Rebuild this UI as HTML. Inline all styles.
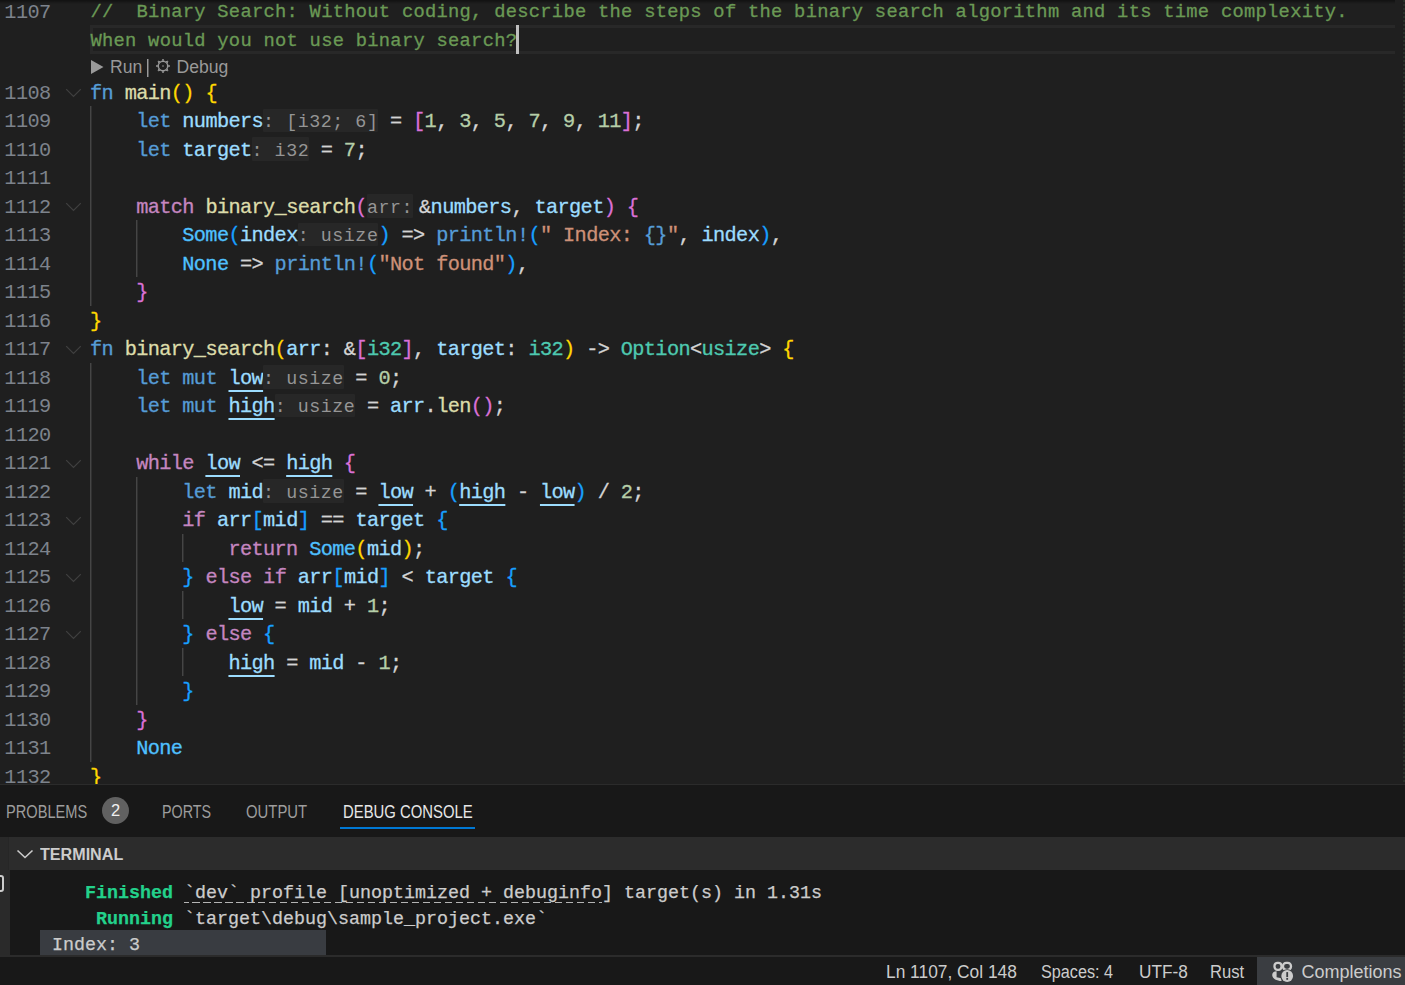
<!DOCTYPE html>
<html><head><meta charset="utf-8"><style>
*{margin:0;padding:0;box-sizing:border-box}
html,body{width:1405px;height:985px;overflow:hidden;background:#181818}
body{position:relative;font-family:"Liberation Sans",sans-serif}
#ed{position:absolute;left:0;top:0;width:1405px;height:784px;background:#1f1f1f;overflow:hidden}
.row{position:absolute;left:90px;height:28.5px;line-height:28.5px;font-family:"Liberation Mono",monospace;font-size:20.3px;letter-spacing:-0.6350px;white-space:pre;color:#d4d4d4;padding-top:2.0px;-webkit-text-stroke:0.3px currentColor}
.ln{position:absolute;left:0;width:50.5px;text-align:right;height:28.5px;line-height:28.5px;font-family:"Liberation Mono",monospace;font-size:20.3px;letter-spacing:-0.6350px;color:#7d838c;padding-top:2.0px}
.h{-webkit-text-stroke:0;color:#959595;background:#272727;display:inline-block;font-size:18.3px;letter-spacing:0.5650px;line-height:17.93px;padding-top:5.37px;border-radius:1px}
.hp{margin-right:6px}
.cm{margin-left:0.45px;padding-top:1.5px;font-size:18.8px;letter-spacing:0.2650px;-webkit-text-stroke:0.3px currentColor}
.u{color:#9cdcfe;text-decoration:underline;text-decoration-thickness:2px;text-underline-offset:6px}
.hl{position:absolute;left:90px;width:1305px;height:29px;border:3px solid #282828;border-right:none}
.cursor{position:absolute;width:3px;height:29px;background:#c0c0c0}
.lens{position:absolute;height:24px;line-height:24px;font-size:17.6px;color:#999999;white-space:pre;transform-origin:0 0}
.tri{display:inline-block;width:0;height:0;border-left:13px solid #999;border-top:7px solid transparent;border-bottom:7px solid transparent;margin-right:6px;vertical-align:-1px}
.g{position:absolute;width:1px;background:#454545;box-shadow:1px 0 0 #303030}
.fold{position:absolute;left:65px}
#panel{position:absolute;left:0;top:784px;width:1405px;height:171px;background:#181818;border-top:1px solid #2b2b2b}
.tab{position:absolute;top:16.5px;font-size:17.9px;color:#9d9d9d;white-space:pre;transform:scaleX(0.831);transform-origin:0 0}
.badge{position:absolute;left:102px;top:12px;width:27px;height:27px;border-radius:14px;background:#616161;color:#f0f0f0;font-size:16.5px;text-align:center;line-height:27px}
.th{position:absolute;left:0;top:52px;width:1405px;height:33px;background:#2c2c2c}
.term{position:absolute;left:10px;top:85px;width:1395px;height:86px;background:#181818}
.tl{position:absolute;left:31px;height:26px;line-height:26px;padding-top:1.5px;font-family:"Liberation Mono",monospace;font-size:18.33px;color:#cccccc;white-space:pre;-webkit-text-stroke:0.25px currentColor}
.dl{background:repeating-linear-gradient(90deg,#b4b4b4 0 4.5px,transparent 4.5px 8px,#b4b4b4 8px 11px) 0 calc(100% - 1px)/100% 1px no-repeat;}
#sb{position:absolute;left:0;top:955px;width:1405px;height:30px;background:#181818;border-top:2px solid #2b2b2b}
.si{position:absolute;top:4.5px;font-size:18px;color:#cccccc;white-space:pre;transform-origin:0 0}
</style></head>
<body>
<div id="ed">
<div class="ln" style="top:-3.50px">1107</div>
<div class="hl" style="top:25.00px"></div>
<div class="row cm" style="top:-3.50px;color:#6a9955">//  Binary Search: Without coding, describe the steps of the binary search algorithm and its time complexity.</div>
<div class="row cm" style="top:25.00px;color:#6a9955">When would you not use binary search?</div>
<div class="cursor" style="left:516px;top:25px"></div>
<svg style="position:absolute;left:91px;top:59.70px" width="13" height="14" viewBox="0 0 13 14"><path d="M0 0 L12.5 7 L0 14 Z" fill="#9a9a9a"/></svg>
<div class="lens" style="left:110px;top:54.50px">Run</div>
<div style="position:absolute;left:147px;top:58.50px;width:1px;height:18px;background:#9a9a9a;box-shadow:1px 0 0 #5a5a5a"></div>
<svg style="position:absolute;left:156px;top:59.10px" width="14" height="14" viewBox="0 0 14 14"><circle cx="7" cy="7" r="4.6" fill="none" stroke="#999" stroke-width="1.2"/><path d="M11.42 5.73 L13.90 7.00 L11.42 8.27" fill="none" stroke="#999" stroke-width="1"/><path d="M11.02 9.23 L11.88 11.88 L9.23 11.02" fill="none" stroke="#999" stroke-width="1"/><path d="M8.27 11.42 L7.00 13.90 L5.73 11.42" fill="none" stroke="#999" stroke-width="1"/><path d="M4.77 11.02 L2.12 11.88 L2.98 9.23" fill="none" stroke="#999" stroke-width="1"/><path d="M2.58 8.27 L0.10 7.00 L2.58 5.73" fill="none" stroke="#999" stroke-width="1"/><path d="M2.98 4.77 L2.12 2.12 L4.77 2.98" fill="none" stroke="#999" stroke-width="1"/><path d="M5.73 2.58 L7.00 0.10 L8.27 2.58" fill="none" stroke="#999" stroke-width="1"/><path d="M9.23 2.98 L11.88 2.12 L11.02 4.77" fill="none" stroke="#999" stroke-width="1"/><circle cx="7" cy="7" r="0.8" fill="#999"/></svg>
<div class="lens" style="left:176.5px;top:54.50px">Debug</div>
<div class="g" style="left:90.00px;top:106.20px;height:199.50px"></div>
<div class="g" style="left:136.18px;top:220.20px;height:57.00px"></div>
<div class="g" style="left:90.00px;top:362.70px;height:399.00px"></div>
<div class="g" style="left:136.18px;top:476.70px;height:228.00px"></div>
<div class="g" style="left:182.36px;top:533.70px;height:28.50px"></div>
<div class="g" style="left:182.36px;top:590.70px;height:28.50px"></div>
<div class="g" style="left:182.36px;top:647.70px;height:28.50px"></div>
<div class="ln" style="top:77.70px">1108</div>
<svg class="fold" style="top:88.20px" width="17" height="10" viewBox="0 0 17 10"><path d="M1.2 1.2 L8.5 8.5 L15.8 1.2" fill="none" stroke="#404040" stroke-width="1.2"/></svg>
<div class="row" style="top:77.70px"><span style="color:#569cd6">fn</span><span style="color:#d4d4d4"> </span><span style="color:#dcdcaa">main</span><span style="color:#ffd700">()</span><span style="color:#d4d4d4"> </span><span style="color:#ffd700">{</span></div>
<div class="ln" style="top:106.20px">1109</div>
<div class="row" style="top:106.20px"><span style="color:#d4d4d4">    </span><span style="color:#569cd6">let</span><span style="color:#d4d4d4"> </span><span style="color:#9cdcfe">numbers</span><span class="h">: [i32; 6]</span><span style="color:#d4d4d4"> = </span><span style="color:#da70d6">[</span><span style="color:#b5cea8">1</span><span style="color:#d4d4d4">, </span><span style="color:#b5cea8">3</span><span style="color:#d4d4d4">, </span><span style="color:#b5cea8">5</span><span style="color:#d4d4d4">, </span><span style="color:#b5cea8">7</span><span style="color:#d4d4d4">, </span><span style="color:#b5cea8">9</span><span style="color:#d4d4d4">, </span><span style="color:#b5cea8">11</span><span style="color:#da70d6">]</span><span style="color:#d4d4d4">;</span></div>
<div class="ln" style="top:134.70px">1110</div>
<div class="row" style="top:134.70px"><span style="color:#d4d4d4">    </span><span style="color:#569cd6">let</span><span style="color:#d4d4d4"> </span><span style="color:#9cdcfe">target</span><span class="h">: i32</span><span style="color:#d4d4d4"> = </span><span style="color:#b5cea8">7</span><span style="color:#d4d4d4">;</span></div>
<div class="ln" style="top:163.20px">1111</div>
<div class="row" style="top:163.20px"></div>
<div class="ln" style="top:191.70px">1112</div>
<svg class="fold" style="top:202.20px" width="17" height="10" viewBox="0 0 17 10"><path d="M1.2 1.2 L8.5 8.5 L15.8 1.2" fill="none" stroke="#404040" stroke-width="1.2"/></svg>
<div class="row" style="top:191.70px"><span style="color:#d4d4d4">    </span><span style="color:#c586c0">match</span><span style="color:#d4d4d4"> </span><span style="color:#dcdcaa">binary_search</span><span style="color:#da70d6">(</span><span class="h hp">arr:</span><span style="color:#d4d4d4">&amp;</span><span style="color:#9cdcfe">numbers</span><span style="color:#d4d4d4">, </span><span style="color:#9cdcfe">target</span><span style="color:#da70d6">)</span><span style="color:#d4d4d4"> </span><span style="color:#da70d6">{</span></div>
<div class="ln" style="top:220.20px">1113</div>
<div class="row" style="top:220.20px"><span style="color:#d4d4d4">        </span><span style="color:#4fc1ff">Some</span><span style="color:#179fff">(</span><span style="color:#9cdcfe">index</span><span class="h">: usize</span><span style="color:#179fff">)</span><span style="color:#d4d4d4"> =&gt; </span><span style="color:#569cd6">println!</span><span style="color:#179fff">(</span><span style="color:#ce9178">&quot; Index: </span><span style="color:#569cd6">{}</span><span style="color:#ce9178">&quot;</span><span style="color:#d4d4d4">, </span><span style="color:#9cdcfe">index</span><span style="color:#179fff">)</span><span style="color:#d4d4d4">,</span></div>
<div class="ln" style="top:248.70px">1114</div>
<div class="row" style="top:248.70px"><span style="color:#d4d4d4">        </span><span style="color:#4fc1ff">None</span><span style="color:#d4d4d4"> =&gt; </span><span style="color:#569cd6">println!</span><span style="color:#179fff">(</span><span style="color:#ce9178">&quot;Not found&quot;</span><span style="color:#179fff">)</span><span style="color:#d4d4d4">,</span></div>
<div class="ln" style="top:277.20px">1115</div>
<div class="row" style="top:277.20px"><span style="color:#d4d4d4">    </span><span style="color:#da70d6">}</span></div>
<div class="ln" style="top:305.70px">1116</div>
<div class="row" style="top:305.70px"><span style="color:#ffd700">}</span></div>
<div class="ln" style="top:334.20px">1117</div>
<svg class="fold" style="top:344.70px" width="17" height="10" viewBox="0 0 17 10"><path d="M1.2 1.2 L8.5 8.5 L15.8 1.2" fill="none" stroke="#404040" stroke-width="1.2"/></svg>
<div class="row" style="top:334.20px"><span style="color:#569cd6">fn</span><span style="color:#d4d4d4"> </span><span style="color:#dcdcaa">binary_search</span><span style="color:#ffd700">(</span><span style="color:#9cdcfe">arr</span><span style="color:#d4d4d4">: &amp;</span><span style="color:#da70d6">[</span><span style="color:#4ec9b0">i32</span><span style="color:#da70d6">]</span><span style="color:#d4d4d4">, </span><span style="color:#9cdcfe">target</span><span style="color:#d4d4d4">: </span><span style="color:#4ec9b0">i32</span><span style="color:#ffd700">)</span><span style="color:#d4d4d4"> -&gt; </span><span style="color:#4ec9b0">Option</span><span style="color:#d4d4d4">&lt;</span><span style="color:#4ec9b0">usize</span><span style="color:#d4d4d4">&gt;</span><span style="color:#d4d4d4"> </span><span style="color:#ffd700">{</span></div>
<div class="ln" style="top:362.70px">1118</div>
<div class="row" style="top:362.70px"><span style="color:#d4d4d4">    </span><span style="color:#569cd6">let</span><span style="color:#d4d4d4"> </span><span style="color:#569cd6">mut</span><span style="color:#d4d4d4"> </span><span class="u">low</span><span class="h">: usize</span><span style="color:#d4d4d4"> = </span><span style="color:#b5cea8">0</span><span style="color:#d4d4d4">;</span></div>
<div class="ln" style="top:391.20px">1119</div>
<div class="row" style="top:391.20px"><span style="color:#d4d4d4">    </span><span style="color:#569cd6">let</span><span style="color:#d4d4d4"> </span><span style="color:#569cd6">mut</span><span style="color:#d4d4d4"> </span><span class="u">high</span><span class="h">: usize</span><span style="color:#d4d4d4"> = </span><span style="color:#9cdcfe">arr</span><span style="color:#d4d4d4">.</span><span style="color:#dcdcaa">len</span><span style="color:#da70d6">()</span><span style="color:#d4d4d4">;</span></div>
<div class="ln" style="top:419.70px">1120</div>
<div class="row" style="top:419.70px"></div>
<div class="ln" style="top:448.20px">1121</div>
<svg class="fold" style="top:458.70px" width="17" height="10" viewBox="0 0 17 10"><path d="M1.2 1.2 L8.5 8.5 L15.8 1.2" fill="none" stroke="#404040" stroke-width="1.2"/></svg>
<div class="row" style="top:448.20px"><span style="color:#d4d4d4">    </span><span style="color:#c586c0">while</span><span style="color:#d4d4d4"> </span><span class="u">low</span><span style="color:#d4d4d4"> &lt;= </span><span class="u">high</span><span style="color:#d4d4d4"> </span><span style="color:#da70d6">{</span></div>
<div class="ln" style="top:476.70px">1122</div>
<div class="row" style="top:476.70px"><span style="color:#d4d4d4">        </span><span style="color:#569cd6">let</span><span style="color:#d4d4d4"> </span><span style="color:#9cdcfe">mid</span><span class="h">: usize</span><span style="color:#d4d4d4"> = </span><span class="u">low</span><span style="color:#d4d4d4"> + </span><span style="color:#179fff">(</span><span class="u">high</span><span style="color:#d4d4d4"> - </span><span class="u">low</span><span style="color:#179fff">)</span><span style="color:#d4d4d4"> / </span><span style="color:#b5cea8">2</span><span style="color:#d4d4d4">;</span></div>
<div class="ln" style="top:505.20px">1123</div>
<svg class="fold" style="top:515.70px" width="17" height="10" viewBox="0 0 17 10"><path d="M1.2 1.2 L8.5 8.5 L15.8 1.2" fill="none" stroke="#404040" stroke-width="1.2"/></svg>
<div class="row" style="top:505.20px"><span style="color:#d4d4d4">        </span><span style="color:#c586c0">if</span><span style="color:#d4d4d4"> </span><span style="color:#9cdcfe">arr</span><span style="color:#179fff">[</span><span style="color:#9cdcfe">mid</span><span style="color:#179fff">]</span><span style="color:#d4d4d4"> == </span><span style="color:#9cdcfe">target</span><span style="color:#d4d4d4"> </span><span style="color:#179fff">{</span></div>
<div class="ln" style="top:533.70px">1124</div>
<div class="row" style="top:533.70px"><span style="color:#d4d4d4">            </span><span style="color:#c586c0">return</span><span style="color:#d4d4d4"> </span><span style="color:#4fc1ff">Some</span><span style="color:#ffd700">(</span><span style="color:#9cdcfe">mid</span><span style="color:#ffd700">)</span><span style="color:#d4d4d4">;</span></div>
<div class="ln" style="top:562.20px">1125</div>
<svg class="fold" style="top:572.70px" width="17" height="10" viewBox="0 0 17 10"><path d="M1.2 1.2 L8.5 8.5 L15.8 1.2" fill="none" stroke="#404040" stroke-width="1.2"/></svg>
<div class="row" style="top:562.20px"><span style="color:#d4d4d4">        </span><span style="color:#179fff">}</span><span style="color:#d4d4d4"> </span><span style="color:#c586c0">else</span><span style="color:#d4d4d4"> </span><span style="color:#c586c0">if</span><span style="color:#d4d4d4"> </span><span style="color:#9cdcfe">arr</span><span style="color:#179fff">[</span><span style="color:#9cdcfe">mid</span><span style="color:#179fff">]</span><span style="color:#d4d4d4"> &lt; </span><span style="color:#9cdcfe">target</span><span style="color:#d4d4d4"> </span><span style="color:#179fff">{</span></div>
<div class="ln" style="top:590.70px">1126</div>
<div class="row" style="top:590.70px"><span style="color:#d4d4d4">            </span><span class="u">low</span><span style="color:#d4d4d4"> = </span><span style="color:#9cdcfe">mid</span><span style="color:#d4d4d4"> + </span><span style="color:#b5cea8">1</span><span style="color:#d4d4d4">;</span></div>
<div class="ln" style="top:619.20px">1127</div>
<svg class="fold" style="top:629.70px" width="17" height="10" viewBox="0 0 17 10"><path d="M1.2 1.2 L8.5 8.5 L15.8 1.2" fill="none" stroke="#404040" stroke-width="1.2"/></svg>
<div class="row" style="top:619.20px"><span style="color:#d4d4d4">        </span><span style="color:#179fff">}</span><span style="color:#d4d4d4"> </span><span style="color:#c586c0">else</span><span style="color:#d4d4d4"> </span><span style="color:#179fff">{</span></div>
<div class="ln" style="top:647.70px">1128</div>
<div class="row" style="top:647.70px"><span style="color:#d4d4d4">            </span><span class="u">high</span><span style="color:#d4d4d4"> = </span><span style="color:#9cdcfe">mid</span><span style="color:#d4d4d4"> - </span><span style="color:#b5cea8">1</span><span style="color:#d4d4d4">;</span></div>
<div class="ln" style="top:676.20px">1129</div>
<div class="row" style="top:676.20px"><span style="color:#d4d4d4">        </span><span style="color:#179fff">}</span></div>
<div class="ln" style="top:704.70px">1130</div>
<div class="row" style="top:704.70px"><span style="color:#d4d4d4">    </span><span style="color:#da70d6">}</span></div>
<div class="ln" style="top:733.20px">1131</div>
<div class="row" style="top:733.20px"><span style="color:#d4d4d4">    </span><span style="color:#4fc1ff">None</span></div>
<div class="ln" style="top:761.70px">1132</div>
<div class="row" style="top:761.70px"><span style="color:#ffd700">}</span></div>
<div style="position:absolute;left:0;top:0;width:1395px;height:4px;background:linear-gradient(rgba(0,0,0,0.45),rgba(0,0,0,0))"></div>
<div style="position:absolute;left:1395px;top:0;width:10px;height:784px;background:#1f1f1f"><div style="position:absolute;left:7.5px;top:0;width:2.5px;height:784px;background:repeating-linear-gradient(#29312a 0 2px,#1f1f1f 2px 4px)"></div></div>
</div>
<div id="panel">
  <div class="tab" style="left:6px;transform:scaleX(0.817)">PROBLEMS</div>
  <div class="badge">2</div>
  <div class="tab" style="left:162px;transform:scaleX(0.802)">PORTS</div>
  <div class="tab" style="left:246px">OUTPUT</div>
  <div class="tab" style="left:343px;color:#e7e7e7">DEBUG CONSOLE</div>
  <div style="position:absolute;left:340px;top:42px;width:135px;height:2px;background:#0078d4"></div>
  <div class="th"><div style="position:absolute;left:0;top:0;width:9px;height:33px;background:#292929;border-right:1px solid #262626"></div>
    <svg style="position:absolute;left:16px;top:11.5px" width="18" height="10" viewBox="0 0 18 10"><path d="M1.5 1.5 L9 8.5 L16.5 1.5" fill="none" stroke="#cccccc" stroke-width="1.6"/></svg>
    <div style="position:absolute;left:40px;top:7.5px;font-size:16.8px;font-weight:bold;color:#cccccc;transform:scaleX(0.96);transform-origin:0 0">TERMINAL</div>
  </div>
  <div style="position:absolute;left:0;top:85px;width:10px;height:86px;background:#2a2a2a"><div style="position:absolute;left:-6px;top:4.5px;width:9.5px;height:17px;border:2px solid #cccccc;border-radius:3px;background:#202020"></div></div>
  <div class="term">
    <div class="tl" style="top:9px"><b style="color:#23d18b">    Finished</b> <span class="dl">`dev` profile [unoptimized + debuginfo</span>] target(s) in 1.31s</div>
    <div class="tl" style="top:35px"><b style="color:#23d18b">     Running</b> `target\debug\sample_project.exe`</div>
    <div style="position:absolute;left:30px;top:59.5px;width:286px;height:26px;background:#393c41"></div>
    <div class="tl" style="top:61px"> Index: 3</div>
  </div>
</div>
<div id="sb">
  <div class="si" style="left:886px;transform:scaleX(0.964)">Ln 1107, Col 148</div>
  <div class="si" style="left:1041px;transform:scaleX(0.90)">Spaces: 4</div>
  <div class="si" style="left:1138.5px;transform:scaleX(0.957)">UTF-8</div>
  <div class="si" style="left:1210px;transform:scaleX(0.923)">Rust</div>
  <div style="position:absolute;left:1257px;top:0;width:148px;height:28px;background:#3a3d41"></div>
<svg style="position:absolute;left:1270px;top:1.5px" width="26" height="26" viewBox="0 0 26 26">
<rect x="4.5" y="3.8" width="7" height="7" rx="3" fill="none" stroke="#cccccc" stroke-width="2.3"/>
<rect x="13" y="3.8" width="8" height="7" rx="3.2" fill="none" stroke="#cccccc" stroke-width="2.3"/>
<path d="M2.2 16 C2.2 13.6 3.8 12.2 6.6 12.2 L6.6 18.2 L11.5 19.2 L11.5 22 C7 22 2.2 19.8 2.2 16 Z" fill="#cccccc"/>
<circle cx="17.2" cy="17" r="6.8" fill="#3a3d41"/>
<circle cx="17.2" cy="17" r="5.9" fill="#cccccc"/>
<rect x="16.3" y="13.1" width="1.8" height="5" fill="#3a3d41"/>
<rect x="16.3" y="19" width="1.8" height="1.8" fill="#3a3d41"/>
</svg>
  <div class="si" style="left:1301.5px;transform:scaleX(1.0)">Completions</div>
</div>
</body></html>
